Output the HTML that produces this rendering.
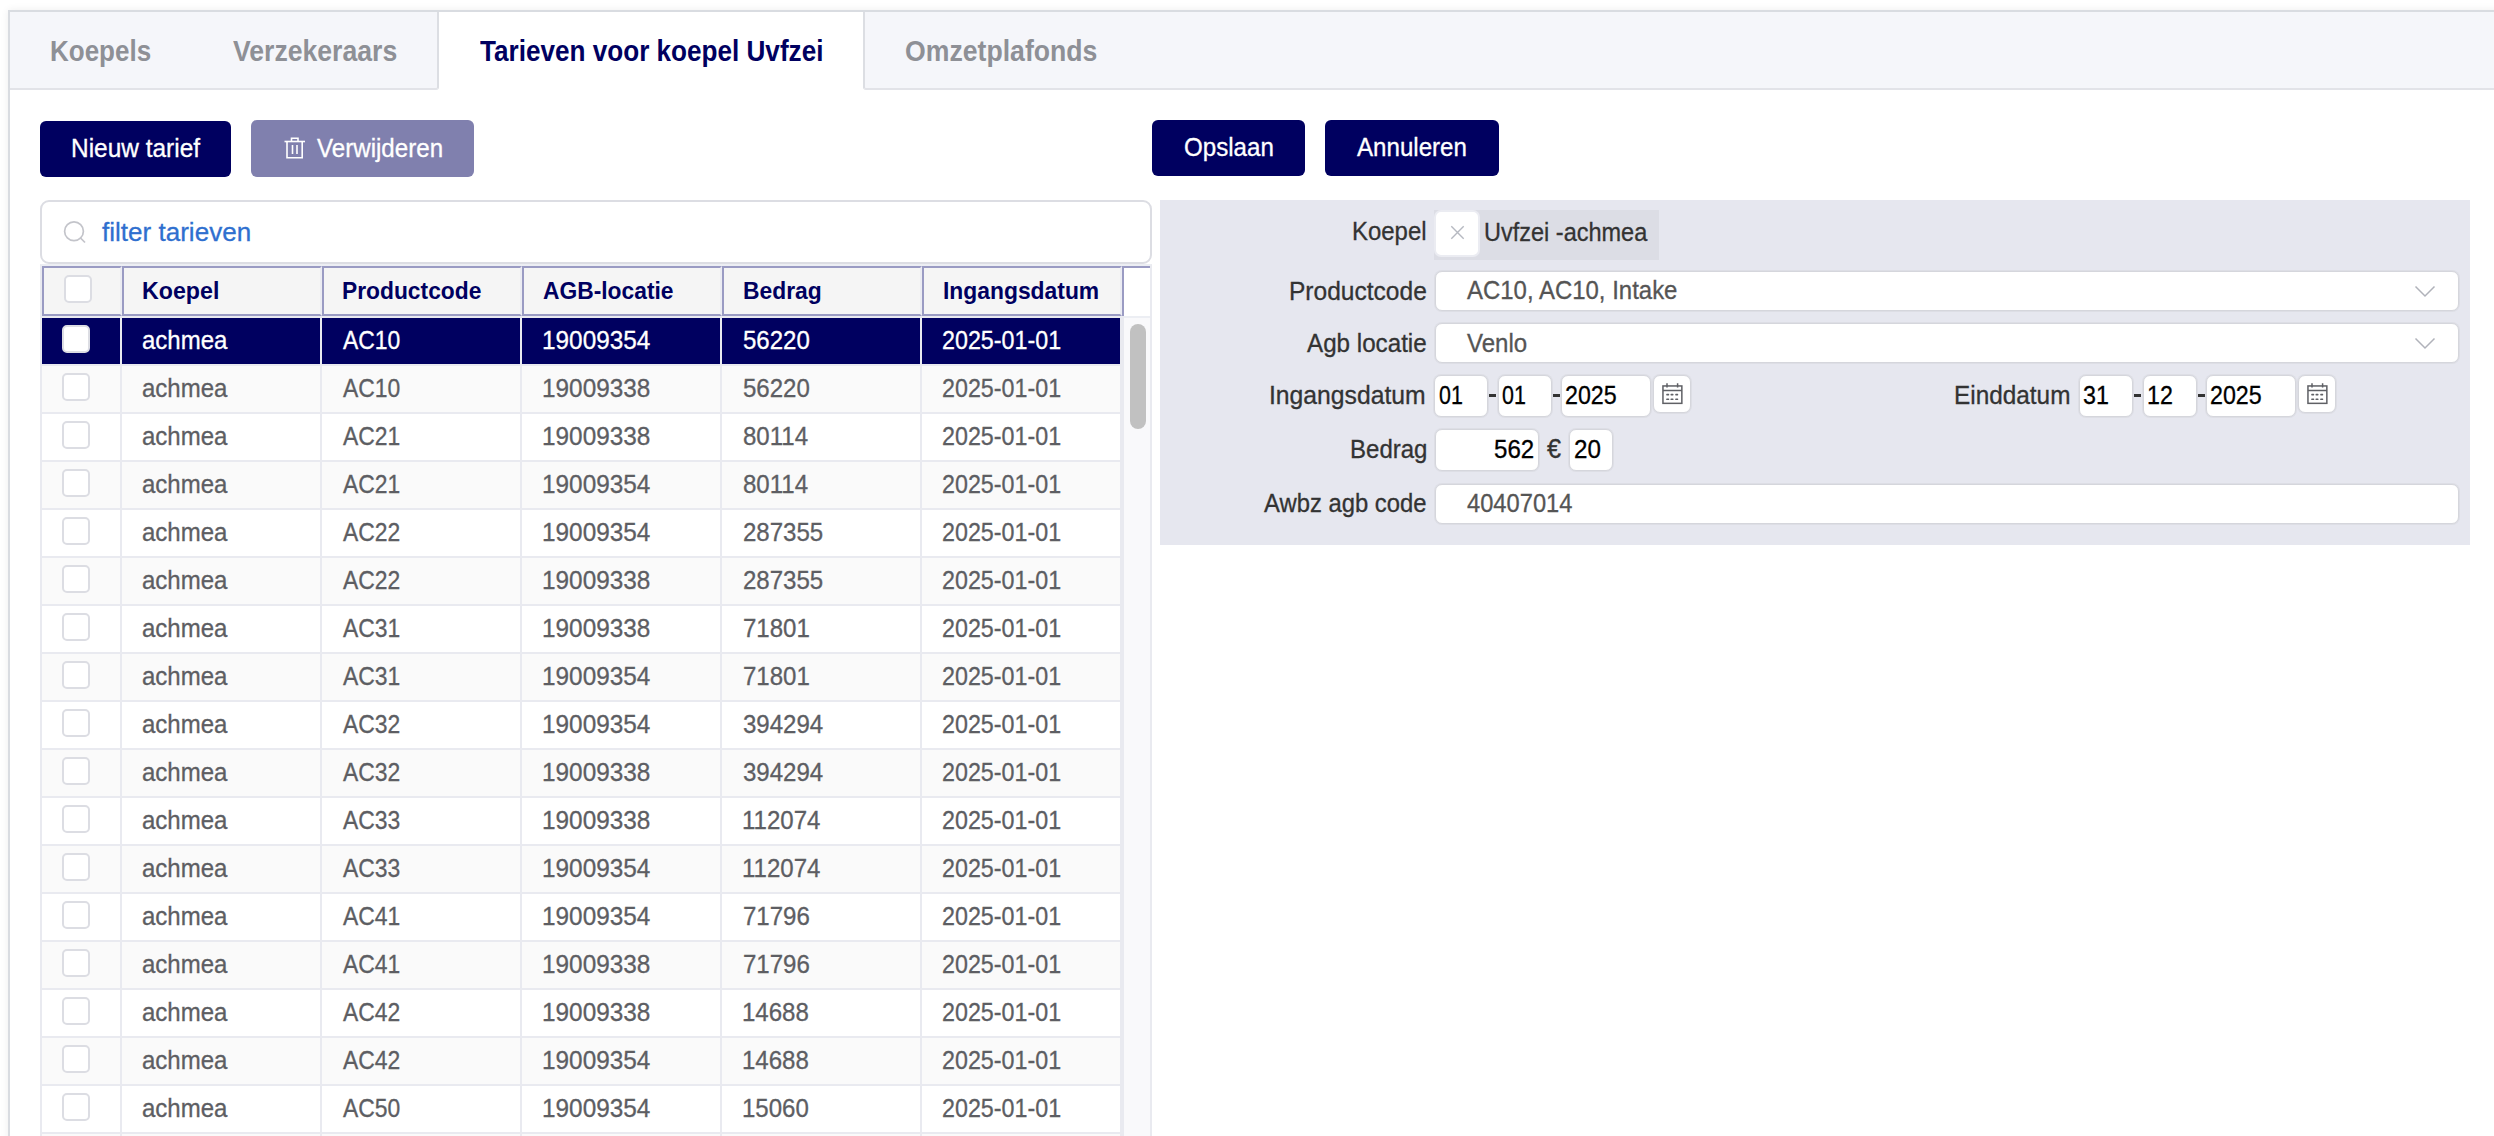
<!DOCTYPE html>
<html><head><meta charset="utf-8"><title>Tarieven</title>
<style>
html,body{margin:0;padding:0;background:#fff;width:2494px;height:1136px;overflow:hidden;}
body{position:relative;font-family:"Liberation Sans", sans-serif;}
.t{position:absolute;white-space:pre;transform-origin:0 0;-webkit-text-stroke:0.3px currentColor;}
.r{position:absolute;box-sizing:border-box;}
svg{position:absolute;overflow:visible;}
</style></head><body>

<div class="r" style="left:8px;top:10px;width:2592px;height:1290px;border-left:2px solid #d9dce1;border-top:2px solid #d9dce1;box-shadow:0 0 8px rgba(0,0,0,0.07);background:#fff;"></div>
<div class="r" style="left:10px;top:12px;width:429px;height:78px;background:#f5f6fa;border-right:2px solid #dcdee3;border-bottom:2px solid #e2e3e8;border-bottom-right-radius:3px;"></div>
<div class="r" style="left:863px;top:12px;width:1737px;height:78px;background:#f5f6fa;border-left:2px solid #dcdee3;border-bottom:2px solid #e2e3e8;border-bottom-left-radius:3px;"></div>
<div class="r" style="left:40px;top:121px;width:191px;height:56px;background:#000060;border-radius:6px;"></div>
<div class="r" style="left:251px;top:120px;width:223px;height:57px;background:#8080ae;border-radius:6px;"></div>
<svg style="left:284px;top:137px" width="22" height="23" viewBox="0 0 22 23">
<g fill="none" stroke="#fff" stroke-width="1.6">
<path d="M0.5 4.5 H21"/><path d="M7.5 4.5 V1.3 H14 V4.5"/>
<path d="M3 4.5 V20.8 H18.2 V4.5"/>
<path d="M8.5 8 V17"/><path d="M13 8 V17"/>
</g></svg>
<div class="r" style="left:1152px;top:120px;width:153px;height:56px;background:#000060;border-radius:6px;"></div>
<div class="r" style="left:1325px;top:120px;width:174px;height:56px;background:#000060;border-radius:6px;"></div>
<div class="r" style="left:40px;top:200px;width:1112px;height:64px;border:2px solid #dcdde3;border-radius:9px;background:#fff;"></div>
<svg style="left:62px;top:220px" width="26" height="26" viewBox="0 0 26 26">
<g fill="none" stroke="#c3c4ca" stroke-width="1.7"><circle cx="12" cy="11.3" r="9.4"/><path d="M18.5 18 L23 22.5"/></g></svg>
<div class="r" style="left:40px;top:264px;width:1112px;height:936px;border-left:2px solid #e9eaf0;border-right:2px solid #e9eaf0;border-top:2px solid #eceef3;background:#fff;"></div>
<div class="r" style="left:42px;top:266px;width:80px;height:50px;background:#f5f5f5;border-left:2px solid #9a9bc3;border-top:2px solid #9a9bc3;border-bottom:2px solid #9a9bc3;border-right:2px solid #ebecf2;"></div>
<div class="r" style="left:122px;top:266px;width:200px;height:50px;background:#f5f5f5;border-left:2px solid #9a9bc3;border-top:2px solid #9a9bc3;border-bottom:2px solid #9a9bc3;border-right:2px solid #ebecf2;"></div>
<div class="r" style="left:322px;top:266px;width:200px;height:50px;background:#f5f5f5;border-left:2px solid #9a9bc3;border-top:2px solid #9a9bc3;border-bottom:2px solid #9a9bc3;border-right:2px solid #ebecf2;"></div>
<div class="r" style="left:522px;top:266px;width:200px;height:50px;background:#f5f5f5;border-left:2px solid #9a9bc3;border-top:2px solid #9a9bc3;border-bottom:2px solid #9a9bc3;border-right:2px solid #ebecf2;"></div>
<div class="r" style="left:722px;top:266px;width:200px;height:50px;background:#f5f5f5;border-left:2px solid #9a9bc3;border-top:2px solid #9a9bc3;border-bottom:2px solid #9a9bc3;border-right:2px solid #ebecf2;"></div>
<div class="r" style="left:922px;top:266px;width:200px;height:50px;background:#f5f5f5;border-left:2px solid #9a9bc3;border-top:2px solid #9a9bc3;border-bottom:2px solid #9a9bc3;border-right:2px solid #ebecf2;"></div>
<div class="r" style="left:1122px;top:266px;width:28px;height:52px;background:#fff;border-left:2px solid #9a9bc3;border-top:2px solid #9a9bc3;border-bottom:2px solid #eceef3;"></div>
<div class="r" style="left:64px;top:275px;width:28px;height:28px;background:#fff;border:2px solid #dcdde3;border-radius:5px;"></div>
<div class="r" style="left:42px;top:316px;width:1082px;height:884px;background:#e9eaf0;"></div>
<div class="r" style="left:42px;top:318px;width:78px;height:46px;background:#000060;"></div>
<div class="r" style="left:122px;top:318px;width:198px;height:46px;background:#000060;"></div>
<div class="r" style="left:322px;top:318px;width:198px;height:46px;background:#000060;"></div>
<div class="r" style="left:522px;top:318px;width:198px;height:46px;background:#000060;"></div>
<div class="r" style="left:722px;top:318px;width:198px;height:46px;background:#000060;"></div>
<div class="r" style="left:922px;top:318px;width:198px;height:46px;background:#000060;"></div>
<div class="r" style="left:62px;top:325px;width:28px;height:28px;background:#fff;border:2px solid #dcdde3;border-radius:5px;"></div>
<div class="r" style="left:42px;top:366px;width:78px;height:46px;background:#fafafa;"></div>
<div class="r" style="left:122px;top:366px;width:198px;height:46px;background:#fafafa;"></div>
<div class="r" style="left:322px;top:366px;width:198px;height:46px;background:#fafafa;"></div>
<div class="r" style="left:522px;top:366px;width:198px;height:46px;background:#fafafa;"></div>
<div class="r" style="left:722px;top:366px;width:198px;height:46px;background:#fafafa;"></div>
<div class="r" style="left:922px;top:366px;width:198px;height:46px;background:#fafafa;"></div>
<div class="r" style="left:62px;top:373px;width:28px;height:28px;background:#fff;border:2px solid #dcdde3;border-radius:5px;"></div>
<div class="r" style="left:42px;top:414px;width:78px;height:46px;background:#fff;"></div>
<div class="r" style="left:122px;top:414px;width:198px;height:46px;background:#fff;"></div>
<div class="r" style="left:322px;top:414px;width:198px;height:46px;background:#fff;"></div>
<div class="r" style="left:522px;top:414px;width:198px;height:46px;background:#fff;"></div>
<div class="r" style="left:722px;top:414px;width:198px;height:46px;background:#fff;"></div>
<div class="r" style="left:922px;top:414px;width:198px;height:46px;background:#fff;"></div>
<div class="r" style="left:62px;top:421px;width:28px;height:28px;background:#fff;border:2px solid #dcdde3;border-radius:5px;"></div>
<div class="r" style="left:42px;top:462px;width:78px;height:46px;background:#fafafa;"></div>
<div class="r" style="left:122px;top:462px;width:198px;height:46px;background:#fafafa;"></div>
<div class="r" style="left:322px;top:462px;width:198px;height:46px;background:#fafafa;"></div>
<div class="r" style="left:522px;top:462px;width:198px;height:46px;background:#fafafa;"></div>
<div class="r" style="left:722px;top:462px;width:198px;height:46px;background:#fafafa;"></div>
<div class="r" style="left:922px;top:462px;width:198px;height:46px;background:#fafafa;"></div>
<div class="r" style="left:62px;top:469px;width:28px;height:28px;background:#fff;border:2px solid #dcdde3;border-radius:5px;"></div>
<div class="r" style="left:42px;top:510px;width:78px;height:46px;background:#fff;"></div>
<div class="r" style="left:122px;top:510px;width:198px;height:46px;background:#fff;"></div>
<div class="r" style="left:322px;top:510px;width:198px;height:46px;background:#fff;"></div>
<div class="r" style="left:522px;top:510px;width:198px;height:46px;background:#fff;"></div>
<div class="r" style="left:722px;top:510px;width:198px;height:46px;background:#fff;"></div>
<div class="r" style="left:922px;top:510px;width:198px;height:46px;background:#fff;"></div>
<div class="r" style="left:62px;top:517px;width:28px;height:28px;background:#fff;border:2px solid #dcdde3;border-radius:5px;"></div>
<div class="r" style="left:42px;top:558px;width:78px;height:46px;background:#fafafa;"></div>
<div class="r" style="left:122px;top:558px;width:198px;height:46px;background:#fafafa;"></div>
<div class="r" style="left:322px;top:558px;width:198px;height:46px;background:#fafafa;"></div>
<div class="r" style="left:522px;top:558px;width:198px;height:46px;background:#fafafa;"></div>
<div class="r" style="left:722px;top:558px;width:198px;height:46px;background:#fafafa;"></div>
<div class="r" style="left:922px;top:558px;width:198px;height:46px;background:#fafafa;"></div>
<div class="r" style="left:62px;top:565px;width:28px;height:28px;background:#fff;border:2px solid #dcdde3;border-radius:5px;"></div>
<div class="r" style="left:42px;top:606px;width:78px;height:46px;background:#fff;"></div>
<div class="r" style="left:122px;top:606px;width:198px;height:46px;background:#fff;"></div>
<div class="r" style="left:322px;top:606px;width:198px;height:46px;background:#fff;"></div>
<div class="r" style="left:522px;top:606px;width:198px;height:46px;background:#fff;"></div>
<div class="r" style="left:722px;top:606px;width:198px;height:46px;background:#fff;"></div>
<div class="r" style="left:922px;top:606px;width:198px;height:46px;background:#fff;"></div>
<div class="r" style="left:62px;top:613px;width:28px;height:28px;background:#fff;border:2px solid #dcdde3;border-radius:5px;"></div>
<div class="r" style="left:42px;top:654px;width:78px;height:46px;background:#fafafa;"></div>
<div class="r" style="left:122px;top:654px;width:198px;height:46px;background:#fafafa;"></div>
<div class="r" style="left:322px;top:654px;width:198px;height:46px;background:#fafafa;"></div>
<div class="r" style="left:522px;top:654px;width:198px;height:46px;background:#fafafa;"></div>
<div class="r" style="left:722px;top:654px;width:198px;height:46px;background:#fafafa;"></div>
<div class="r" style="left:922px;top:654px;width:198px;height:46px;background:#fafafa;"></div>
<div class="r" style="left:62px;top:661px;width:28px;height:28px;background:#fff;border:2px solid #dcdde3;border-radius:5px;"></div>
<div class="r" style="left:42px;top:702px;width:78px;height:46px;background:#fff;"></div>
<div class="r" style="left:122px;top:702px;width:198px;height:46px;background:#fff;"></div>
<div class="r" style="left:322px;top:702px;width:198px;height:46px;background:#fff;"></div>
<div class="r" style="left:522px;top:702px;width:198px;height:46px;background:#fff;"></div>
<div class="r" style="left:722px;top:702px;width:198px;height:46px;background:#fff;"></div>
<div class="r" style="left:922px;top:702px;width:198px;height:46px;background:#fff;"></div>
<div class="r" style="left:62px;top:709px;width:28px;height:28px;background:#fff;border:2px solid #dcdde3;border-radius:5px;"></div>
<div class="r" style="left:42px;top:750px;width:78px;height:46px;background:#fafafa;"></div>
<div class="r" style="left:122px;top:750px;width:198px;height:46px;background:#fafafa;"></div>
<div class="r" style="left:322px;top:750px;width:198px;height:46px;background:#fafafa;"></div>
<div class="r" style="left:522px;top:750px;width:198px;height:46px;background:#fafafa;"></div>
<div class="r" style="left:722px;top:750px;width:198px;height:46px;background:#fafafa;"></div>
<div class="r" style="left:922px;top:750px;width:198px;height:46px;background:#fafafa;"></div>
<div class="r" style="left:62px;top:757px;width:28px;height:28px;background:#fff;border:2px solid #dcdde3;border-radius:5px;"></div>
<div class="r" style="left:42px;top:798px;width:78px;height:46px;background:#fff;"></div>
<div class="r" style="left:122px;top:798px;width:198px;height:46px;background:#fff;"></div>
<div class="r" style="left:322px;top:798px;width:198px;height:46px;background:#fff;"></div>
<div class="r" style="left:522px;top:798px;width:198px;height:46px;background:#fff;"></div>
<div class="r" style="left:722px;top:798px;width:198px;height:46px;background:#fff;"></div>
<div class="r" style="left:922px;top:798px;width:198px;height:46px;background:#fff;"></div>
<div class="r" style="left:62px;top:805px;width:28px;height:28px;background:#fff;border:2px solid #dcdde3;border-radius:5px;"></div>
<div class="r" style="left:42px;top:846px;width:78px;height:46px;background:#fafafa;"></div>
<div class="r" style="left:122px;top:846px;width:198px;height:46px;background:#fafafa;"></div>
<div class="r" style="left:322px;top:846px;width:198px;height:46px;background:#fafafa;"></div>
<div class="r" style="left:522px;top:846px;width:198px;height:46px;background:#fafafa;"></div>
<div class="r" style="left:722px;top:846px;width:198px;height:46px;background:#fafafa;"></div>
<div class="r" style="left:922px;top:846px;width:198px;height:46px;background:#fafafa;"></div>
<div class="r" style="left:62px;top:853px;width:28px;height:28px;background:#fff;border:2px solid #dcdde3;border-radius:5px;"></div>
<div class="r" style="left:42px;top:894px;width:78px;height:46px;background:#fff;"></div>
<div class="r" style="left:122px;top:894px;width:198px;height:46px;background:#fff;"></div>
<div class="r" style="left:322px;top:894px;width:198px;height:46px;background:#fff;"></div>
<div class="r" style="left:522px;top:894px;width:198px;height:46px;background:#fff;"></div>
<div class="r" style="left:722px;top:894px;width:198px;height:46px;background:#fff;"></div>
<div class="r" style="left:922px;top:894px;width:198px;height:46px;background:#fff;"></div>
<div class="r" style="left:62px;top:901px;width:28px;height:28px;background:#fff;border:2px solid #dcdde3;border-radius:5px;"></div>
<div class="r" style="left:42px;top:942px;width:78px;height:46px;background:#fafafa;"></div>
<div class="r" style="left:122px;top:942px;width:198px;height:46px;background:#fafafa;"></div>
<div class="r" style="left:322px;top:942px;width:198px;height:46px;background:#fafafa;"></div>
<div class="r" style="left:522px;top:942px;width:198px;height:46px;background:#fafafa;"></div>
<div class="r" style="left:722px;top:942px;width:198px;height:46px;background:#fafafa;"></div>
<div class="r" style="left:922px;top:942px;width:198px;height:46px;background:#fafafa;"></div>
<div class="r" style="left:62px;top:949px;width:28px;height:28px;background:#fff;border:2px solid #dcdde3;border-radius:5px;"></div>
<div class="r" style="left:42px;top:990px;width:78px;height:46px;background:#fff;"></div>
<div class="r" style="left:122px;top:990px;width:198px;height:46px;background:#fff;"></div>
<div class="r" style="left:322px;top:990px;width:198px;height:46px;background:#fff;"></div>
<div class="r" style="left:522px;top:990px;width:198px;height:46px;background:#fff;"></div>
<div class="r" style="left:722px;top:990px;width:198px;height:46px;background:#fff;"></div>
<div class="r" style="left:922px;top:990px;width:198px;height:46px;background:#fff;"></div>
<div class="r" style="left:62px;top:997px;width:28px;height:28px;background:#fff;border:2px solid #dcdde3;border-radius:5px;"></div>
<div class="r" style="left:42px;top:1038px;width:78px;height:46px;background:#fafafa;"></div>
<div class="r" style="left:122px;top:1038px;width:198px;height:46px;background:#fafafa;"></div>
<div class="r" style="left:322px;top:1038px;width:198px;height:46px;background:#fafafa;"></div>
<div class="r" style="left:522px;top:1038px;width:198px;height:46px;background:#fafafa;"></div>
<div class="r" style="left:722px;top:1038px;width:198px;height:46px;background:#fafafa;"></div>
<div class="r" style="left:922px;top:1038px;width:198px;height:46px;background:#fafafa;"></div>
<div class="r" style="left:62px;top:1045px;width:28px;height:28px;background:#fff;border:2px solid #dcdde3;border-radius:5px;"></div>
<div class="r" style="left:42px;top:1086px;width:78px;height:46px;background:#fff;"></div>
<div class="r" style="left:122px;top:1086px;width:198px;height:46px;background:#fff;"></div>
<div class="r" style="left:322px;top:1086px;width:198px;height:46px;background:#fff;"></div>
<div class="r" style="left:522px;top:1086px;width:198px;height:46px;background:#fff;"></div>
<div class="r" style="left:722px;top:1086px;width:198px;height:46px;background:#fff;"></div>
<div class="r" style="left:922px;top:1086px;width:198px;height:46px;background:#fff;"></div>
<div class="r" style="left:62px;top:1093px;width:28px;height:28px;background:#fff;border:2px solid #dcdde3;border-radius:5px;"></div>
<div class="r" style="left:42px;top:1134px;width:78px;height:46px;background:#fafafa;"></div>
<div class="r" style="left:122px;top:1134px;width:198px;height:46px;background:#fafafa;"></div>
<div class="r" style="left:322px;top:1134px;width:198px;height:46px;background:#fafafa;"></div>
<div class="r" style="left:522px;top:1134px;width:198px;height:46px;background:#fafafa;"></div>
<div class="r" style="left:722px;top:1134px;width:198px;height:46px;background:#fafafa;"></div>
<div class="r" style="left:922px;top:1134px;width:198px;height:46px;background:#fafafa;"></div>
<div class="r" style="left:62px;top:1141px;width:28px;height:28px;background:#fff;border:2px solid #dcdde3;border-radius:5px;"></div>
<div class="r" style="left:1124px;top:318px;width:26px;height:882px;background:#f9f9fb;"></div>
<div class="r" style="left:1130px;top:324px;width:16px;height:105px;background:#c1c1c1;border-radius:8px;"></div>
<div class="r" style="left:1160px;top:200px;width:1310px;height:345px;background:#e6e7ef;"></div>
<div class="r" style="left:1434px;top:210px;width:225px;height:50px;background:#dcdde5;"></div>
<div class="r" style="left:1434px;top:210px;width:46px;height:47px;background:#fff;border:2px solid #ebecf2;border-radius:7px;"></div>
<svg style="left:1451px;top:226px" width="13" height="13" viewBox="0 0 13 13"><g stroke="#b6b9c1" stroke-width="1.4"><path d="M0.3 0.3 L12.7 12.7 M12.7 0.3 L0.3 12.7"/></g></svg>
<div class="r" style="left:1435px;top:271px;width:1024px;height:40px;border:1px solid #d5d6dc;border-radius:7px;background:#fff;box-shadow:0 0 0 1px #dddee5;"></div>
<div class="r" style="left:1435px;top:323px;width:1024px;height:40px;border:1px solid #d5d6dc;border-radius:7px;background:#fff;box-shadow:0 0 0 1px #dddee5;"></div>
<svg style="left:2415px;top:286px" width="20" height="11" viewBox="0 0 20 11"><path d="M0.5 0.5 L10 10 L19.5 0.5" fill="none" stroke="#b0b2ba" stroke-width="1.5"/></svg>
<svg style="left:2415px;top:338px" width="20" height="11" viewBox="0 0 20 11"><path d="M0.5 0.5 L10 10 L19.5 0.5" fill="none" stroke="#b0b2ba" stroke-width="1.5"/></svg>
<div class="r" style="left:1434px;top:375px;width:54px;height:42px;border:1px solid #d5d6dc;border-radius:7px;background:#fff;box-shadow:0 0 0 1px #dddee5;"></div>
<div class="r" style="left:1498px;top:375px;width:54px;height:42px;border:1px solid #d5d6dc;border-radius:7px;background:#fff;box-shadow:0 0 0 1px #dddee5;"></div>
<div class="r" style="left:1561px;top:375px;width:90px;height:42px;border:1px solid #d5d6dc;border-radius:7px;background:#fff;box-shadow:0 0 0 1px #dddee5;"></div>
<div class="r" style="left:2079px;top:375px;width:54px;height:42px;border:1px solid #d5d6dc;border-radius:7px;background:#fff;box-shadow:0 0 0 1px #dddee5;"></div>
<div class="r" style="left:2143px;top:375px;width:54px;height:42px;border:1px solid #d5d6dc;border-radius:7px;background:#fff;box-shadow:0 0 0 1px #dddee5;"></div>
<div class="r" style="left:2206px;top:375px;width:90px;height:42px;border:1px solid #d5d6dc;border-radius:7px;background:#fff;box-shadow:0 0 0 1px #dddee5;"></div>
<div class="r" style="left:1489px;top:394px;width:7px;height:3px;background:#333;"></div>
<div class="r" style="left:1553px;top:394px;width:7px;height:3px;background:#333;"></div>
<div class="r" style="left:2134px;top:394px;width:7px;height:3px;background:#333;"></div>
<div class="r" style="left:2198px;top:394px;width:7px;height:3px;background:#333;"></div>
<div class="r" style="left:1653px;top:375px;width:38px;height:38px;border:1px solid #d5d6dc;border-radius:7px;background:#fff;box-shadow:0 0 0 1px #dddee5;"></div>
<svg style="left:1661px;top:382px" width="24" height="24" viewBox="0 0 24 24"><g fill="none" stroke="#5f6065" stroke-width="1.5">
<rect x="1.95" y="3.95" width="18.9" height="17.4"/><path d="M1.95 8.5 H20.85"/><path d="M6 1.2 V5.6 M16.6 1.2 V5.6"/></g>
<g fill="#5f6065"><rect x="5.2" y="11.8" width="3" height="1.6" rx="0.6"/><rect x="9.5" y="11.8" width="3" height="1.6" rx="0.6"/><rect x="14.2" y="11.8" width="3" height="1.6" rx="0.6"/>
<rect x="5.2" y="16.5" width="3" height="1.6" rx="0.6"/><rect x="9.5" y="16.5" width="3" height="1.6" rx="0.6"/><rect x="14.2" y="16.5" width="3" height="1.6" rx="0.6"/></g></svg>
<div class="r" style="left:2298px;top:375px;width:38px;height:38px;border:1px solid #d5d6dc;border-radius:7px;background:#fff;box-shadow:0 0 0 1px #dddee5;"></div>
<svg style="left:2306px;top:382px" width="24" height="24" viewBox="0 0 24 24"><g fill="none" stroke="#5f6065" stroke-width="1.5">
<rect x="1.95" y="3.95" width="18.9" height="17.4"/><path d="M1.95 8.5 H20.85"/><path d="M6 1.2 V5.6 M16.6 1.2 V5.6"/></g>
<g fill="#5f6065"><rect x="5.2" y="11.8" width="3" height="1.6" rx="0.6"/><rect x="9.5" y="11.8" width="3" height="1.6" rx="0.6"/><rect x="14.2" y="11.8" width="3" height="1.6" rx="0.6"/>
<rect x="5.2" y="16.5" width="3" height="1.6" rx="0.6"/><rect x="9.5" y="16.5" width="3" height="1.6" rx="0.6"/><rect x="14.2" y="16.5" width="3" height="1.6" rx="0.6"/></g></svg>
<div class="r" style="left:1435px;top:429px;width:104px;height:42px;border:1px solid #d5d6dc;border-radius:7px;background:#fff;box-shadow:0 0 0 1px #dddee5;"></div>
<div class="r" style="left:1569px;top:429px;width:44px;height:42px;border:1px solid #d5d6dc;border-radius:7px;background:#fff;box-shadow:0 0 0 1px #dddee5;"></div>
<div class="r" style="left:1435px;top:484px;width:1024px;height:40px;border:1px solid #d5d6dc;border-radius:7px;background:#fff;box-shadow:0 0 0 1px #dddee5;"></div>
<div class="t" style="left:49.61px;top:37px;font-size:29px;line-height:29px;font-weight:700;color:#8e9096;transform:scaleX(0.8964);-webkit-text-stroke:0;">Koepels</div>
<div class="t" style="left:233.20px;top:37px;font-size:29px;line-height:29px;font-weight:700;color:#8e9096;transform:scaleX(0.9174);-webkit-text-stroke:0;">Verzekeraars</div>
<div class="t" style="left:479.90px;top:37px;font-size:29px;line-height:29px;font-weight:700;color:#000060;transform:scaleX(0.9003);-webkit-text-stroke:0;">Tarieven voor koepel Uvfzei</div>
<div class="t" style="left:905.18px;top:37px;font-size:29px;line-height:29px;font-weight:700;color:#8e9096;transform:scaleX(0.9184);-webkit-text-stroke:0;">Omzetplafonds</div>
<div class="t" style="left:70.84px;top:136px;font-size:25px;line-height:25px;font-weight:400;color:#fff;transform:scaleX(0.9777);">Nieuw tarief</div>
<div class="t" style="left:316.90px;top:136px;font-size:25px;line-height:25px;font-weight:400;color:#fff;transform:scaleX(0.9651);">Verwijderen</div>
<div class="t" style="left:1183.54px;top:135px;font-size:25px;line-height:25px;font-weight:400;color:#fff;transform:scaleX(0.9648);">Opslaan</div>
<div class="t" style="left:1357.40px;top:135px;font-size:25px;line-height:25px;font-weight:400;color:#fff;transform:scaleX(0.9646);">Annuleren</div>
<div class="t" style="left:102.10px;top:219px;font-size:26px;line-height:26px;font-weight:400;color:#2f6fcf;transform:scaleX(1.0020);">filter tarieven</div>
<div class="t" style="left:142.07px;top:279px;font-size:24px;line-height:24px;font-weight:700;color:#000060;transform:scaleX(0.9671);-webkit-text-stroke:0;">Koepel</div>
<div class="t" style="left:342.30px;top:279px;font-size:24px;line-height:24px;font-weight:700;color:#000060;transform:scaleX(0.9500);-webkit-text-stroke:0;">Productcode</div>
<div class="t" style="left:543.25px;top:279px;font-size:24px;line-height:24px;font-weight:700;color:#000060;transform:scaleX(0.9500);-webkit-text-stroke:0;">AGB-locatie</div>
<div class="t" style="left:742.80px;top:279px;font-size:24px;line-height:24px;font-weight:700;color:#000060;transform:scaleX(0.9519);-webkit-text-stroke:0;">Bedrag</div>
<div class="t" style="left:943.10px;top:279px;font-size:24px;line-height:24px;font-weight:700;color:#000060;transform:scaleX(0.9522);-webkit-text-stroke:0;">Ingangsdatum</div>
<div class="t" style="left:142.04px;top:328px;font-size:25px;line-height:25px;font-weight:400;color:#fff;transform:scaleX(0.9602);">achmea</div>
<div class="t" style="left:343.00px;top:328px;font-size:25px;line-height:25px;font-weight:400;color:#fff;transform:scaleX(0.9161);">AC10</div>
<div class="t" style="left:542.05px;top:328px;font-size:25px;line-height:25px;font-weight:400;color:#fff;transform:scaleX(0.9741);">19009354</div>
<div class="t" style="left:742.54px;top:328px;font-size:25px;line-height:25px;font-weight:400;color:#fff;transform:scaleX(0.9618);">56220</div>
<div class="t" style="left:942.07px;top:328px;font-size:25px;line-height:25px;font-weight:400;color:#fff;transform:scaleX(0.9317);">2025-01-01</div>
<div class="t" style="left:142.04px;top:376px;font-size:25px;line-height:25px;font-weight:400;color:#5d5e63;transform:scaleX(0.9602);">achmea</div>
<div class="t" style="left:343.00px;top:376px;font-size:25px;line-height:25px;font-weight:400;color:#5d5e63;transform:scaleX(0.9161);">AC10</div>
<div class="t" style="left:542.05px;top:376px;font-size:25px;line-height:25px;font-weight:400;color:#5d5e63;transform:scaleX(0.9741);">19009338</div>
<div class="t" style="left:742.54px;top:376px;font-size:25px;line-height:25px;font-weight:400;color:#5d5e63;transform:scaleX(0.9618);">56220</div>
<div class="t" style="left:942.07px;top:376px;font-size:25px;line-height:25px;font-weight:400;color:#5d5e63;transform:scaleX(0.9317);">2025-01-01</div>
<div class="t" style="left:142.04px;top:424px;font-size:25px;line-height:25px;font-weight:400;color:#5d5e63;transform:scaleX(0.9602);">achmea</div>
<div class="t" style="left:343.00px;top:424px;font-size:25px;line-height:25px;font-weight:400;color:#5d5e63;transform:scaleX(0.9161);">AC21</div>
<div class="t" style="left:542.05px;top:424px;font-size:25px;line-height:25px;font-weight:400;color:#5d5e63;transform:scaleX(0.9741);">19009338</div>
<div class="t" style="left:742.54px;top:424px;font-size:25px;line-height:25px;font-weight:400;color:#5d5e63;transform:scaleX(0.9618);">80114</div>
<div class="t" style="left:942.07px;top:424px;font-size:25px;line-height:25px;font-weight:400;color:#5d5e63;transform:scaleX(0.9317);">2025-01-01</div>
<div class="t" style="left:142.04px;top:472px;font-size:25px;line-height:25px;font-weight:400;color:#5d5e63;transform:scaleX(0.9602);">achmea</div>
<div class="t" style="left:343.00px;top:472px;font-size:25px;line-height:25px;font-weight:400;color:#5d5e63;transform:scaleX(0.9161);">AC21</div>
<div class="t" style="left:542.05px;top:472px;font-size:25px;line-height:25px;font-weight:400;color:#5d5e63;transform:scaleX(0.9741);">19009354</div>
<div class="t" style="left:742.54px;top:472px;font-size:25px;line-height:25px;font-weight:400;color:#5d5e63;transform:scaleX(0.9618);">80114</div>
<div class="t" style="left:942.07px;top:472px;font-size:25px;line-height:25px;font-weight:400;color:#5d5e63;transform:scaleX(0.9317);">2025-01-01</div>
<div class="t" style="left:142.04px;top:520px;font-size:25px;line-height:25px;font-weight:400;color:#5d5e63;transform:scaleX(0.9602);">achmea</div>
<div class="t" style="left:343.00px;top:520px;font-size:25px;line-height:25px;font-weight:400;color:#5d5e63;transform:scaleX(0.9161);">AC22</div>
<div class="t" style="left:542.05px;top:520px;font-size:25px;line-height:25px;font-weight:400;color:#5d5e63;transform:scaleX(0.9741);">19009354</div>
<div class="t" style="left:742.54px;top:520px;font-size:25px;line-height:25px;font-weight:400;color:#5d5e63;transform:scaleX(0.9618);">287355</div>
<div class="t" style="left:942.07px;top:520px;font-size:25px;line-height:25px;font-weight:400;color:#5d5e63;transform:scaleX(0.9317);">2025-01-01</div>
<div class="t" style="left:142.04px;top:568px;font-size:25px;line-height:25px;font-weight:400;color:#5d5e63;transform:scaleX(0.9602);">achmea</div>
<div class="t" style="left:343.00px;top:568px;font-size:25px;line-height:25px;font-weight:400;color:#5d5e63;transform:scaleX(0.9161);">AC22</div>
<div class="t" style="left:542.05px;top:568px;font-size:25px;line-height:25px;font-weight:400;color:#5d5e63;transform:scaleX(0.9741);">19009338</div>
<div class="t" style="left:742.54px;top:568px;font-size:25px;line-height:25px;font-weight:400;color:#5d5e63;transform:scaleX(0.9618);">287355</div>
<div class="t" style="left:942.07px;top:568px;font-size:25px;line-height:25px;font-weight:400;color:#5d5e63;transform:scaleX(0.9317);">2025-01-01</div>
<div class="t" style="left:142.04px;top:616px;font-size:25px;line-height:25px;font-weight:400;color:#5d5e63;transform:scaleX(0.9602);">achmea</div>
<div class="t" style="left:343.00px;top:616px;font-size:25px;line-height:25px;font-weight:400;color:#5d5e63;transform:scaleX(0.9161);">AC31</div>
<div class="t" style="left:542.05px;top:616px;font-size:25px;line-height:25px;font-weight:400;color:#5d5e63;transform:scaleX(0.9741);">19009338</div>
<div class="t" style="left:742.54px;top:616px;font-size:25px;line-height:25px;font-weight:400;color:#5d5e63;transform:scaleX(0.9618);">71801</div>
<div class="t" style="left:942.07px;top:616px;font-size:25px;line-height:25px;font-weight:400;color:#5d5e63;transform:scaleX(0.9317);">2025-01-01</div>
<div class="t" style="left:142.04px;top:664px;font-size:25px;line-height:25px;font-weight:400;color:#5d5e63;transform:scaleX(0.9602);">achmea</div>
<div class="t" style="left:343.00px;top:664px;font-size:25px;line-height:25px;font-weight:400;color:#5d5e63;transform:scaleX(0.9161);">AC31</div>
<div class="t" style="left:542.05px;top:664px;font-size:25px;line-height:25px;font-weight:400;color:#5d5e63;transform:scaleX(0.9741);">19009354</div>
<div class="t" style="left:742.54px;top:664px;font-size:25px;line-height:25px;font-weight:400;color:#5d5e63;transform:scaleX(0.9618);">71801</div>
<div class="t" style="left:942.07px;top:664px;font-size:25px;line-height:25px;font-weight:400;color:#5d5e63;transform:scaleX(0.9317);">2025-01-01</div>
<div class="t" style="left:142.04px;top:712px;font-size:25px;line-height:25px;font-weight:400;color:#5d5e63;transform:scaleX(0.9602);">achmea</div>
<div class="t" style="left:343.00px;top:712px;font-size:25px;line-height:25px;font-weight:400;color:#5d5e63;transform:scaleX(0.9161);">AC32</div>
<div class="t" style="left:542.05px;top:712px;font-size:25px;line-height:25px;font-weight:400;color:#5d5e63;transform:scaleX(0.9741);">19009354</div>
<div class="t" style="left:742.54px;top:712px;font-size:25px;line-height:25px;font-weight:400;color:#5d5e63;transform:scaleX(0.9618);">394294</div>
<div class="t" style="left:942.07px;top:712px;font-size:25px;line-height:25px;font-weight:400;color:#5d5e63;transform:scaleX(0.9317);">2025-01-01</div>
<div class="t" style="left:142.04px;top:760px;font-size:25px;line-height:25px;font-weight:400;color:#5d5e63;transform:scaleX(0.9602);">achmea</div>
<div class="t" style="left:343.00px;top:760px;font-size:25px;line-height:25px;font-weight:400;color:#5d5e63;transform:scaleX(0.9161);">AC32</div>
<div class="t" style="left:542.05px;top:760px;font-size:25px;line-height:25px;font-weight:400;color:#5d5e63;transform:scaleX(0.9741);">19009338</div>
<div class="t" style="left:742.54px;top:760px;font-size:25px;line-height:25px;font-weight:400;color:#5d5e63;transform:scaleX(0.9618);">394294</div>
<div class="t" style="left:942.07px;top:760px;font-size:25px;line-height:25px;font-weight:400;color:#5d5e63;transform:scaleX(0.9317);">2025-01-01</div>
<div class="t" style="left:142.04px;top:808px;font-size:25px;line-height:25px;font-weight:400;color:#5d5e63;transform:scaleX(0.9602);">achmea</div>
<div class="t" style="left:343.00px;top:808px;font-size:25px;line-height:25px;font-weight:400;color:#5d5e63;transform:scaleX(0.9161);">AC33</div>
<div class="t" style="left:542.05px;top:808px;font-size:25px;line-height:25px;font-weight:400;color:#5d5e63;transform:scaleX(0.9741);">19009338</div>
<div class="t" style="left:741.58px;top:808px;font-size:25px;line-height:25px;font-weight:400;color:#5d5e63;transform:scaleX(0.9618);">112074</div>
<div class="t" style="left:942.07px;top:808px;font-size:25px;line-height:25px;font-weight:400;color:#5d5e63;transform:scaleX(0.9317);">2025-01-01</div>
<div class="t" style="left:142.04px;top:856px;font-size:25px;line-height:25px;font-weight:400;color:#5d5e63;transform:scaleX(0.9602);">achmea</div>
<div class="t" style="left:343.00px;top:856px;font-size:25px;line-height:25px;font-weight:400;color:#5d5e63;transform:scaleX(0.9161);">AC33</div>
<div class="t" style="left:542.05px;top:856px;font-size:25px;line-height:25px;font-weight:400;color:#5d5e63;transform:scaleX(0.9741);">19009354</div>
<div class="t" style="left:741.58px;top:856px;font-size:25px;line-height:25px;font-weight:400;color:#5d5e63;transform:scaleX(0.9618);">112074</div>
<div class="t" style="left:942.07px;top:856px;font-size:25px;line-height:25px;font-weight:400;color:#5d5e63;transform:scaleX(0.9317);">2025-01-01</div>
<div class="t" style="left:142.04px;top:904px;font-size:25px;line-height:25px;font-weight:400;color:#5d5e63;transform:scaleX(0.9602);">achmea</div>
<div class="t" style="left:343.00px;top:904px;font-size:25px;line-height:25px;font-weight:400;color:#5d5e63;transform:scaleX(0.9161);">AC41</div>
<div class="t" style="left:542.05px;top:904px;font-size:25px;line-height:25px;font-weight:400;color:#5d5e63;transform:scaleX(0.9741);">19009354</div>
<div class="t" style="left:742.54px;top:904px;font-size:25px;line-height:25px;font-weight:400;color:#5d5e63;transform:scaleX(0.9618);">71796</div>
<div class="t" style="left:942.07px;top:904px;font-size:25px;line-height:25px;font-weight:400;color:#5d5e63;transform:scaleX(0.9317);">2025-01-01</div>
<div class="t" style="left:142.04px;top:952px;font-size:25px;line-height:25px;font-weight:400;color:#5d5e63;transform:scaleX(0.9602);">achmea</div>
<div class="t" style="left:343.00px;top:952px;font-size:25px;line-height:25px;font-weight:400;color:#5d5e63;transform:scaleX(0.9161);">AC41</div>
<div class="t" style="left:542.05px;top:952px;font-size:25px;line-height:25px;font-weight:400;color:#5d5e63;transform:scaleX(0.9741);">19009338</div>
<div class="t" style="left:742.54px;top:952px;font-size:25px;line-height:25px;font-weight:400;color:#5d5e63;transform:scaleX(0.9618);">71796</div>
<div class="t" style="left:942.07px;top:952px;font-size:25px;line-height:25px;font-weight:400;color:#5d5e63;transform:scaleX(0.9317);">2025-01-01</div>
<div class="t" style="left:142.04px;top:1000px;font-size:25px;line-height:25px;font-weight:400;color:#5d5e63;transform:scaleX(0.9602);">achmea</div>
<div class="t" style="left:343.00px;top:1000px;font-size:25px;line-height:25px;font-weight:400;color:#5d5e63;transform:scaleX(0.9161);">AC42</div>
<div class="t" style="left:542.05px;top:1000px;font-size:25px;line-height:25px;font-weight:400;color:#5d5e63;transform:scaleX(0.9741);">19009338</div>
<div class="t" style="left:741.58px;top:1000px;font-size:25px;line-height:25px;font-weight:400;color:#5d5e63;transform:scaleX(0.9618);">14688</div>
<div class="t" style="left:942.07px;top:1000px;font-size:25px;line-height:25px;font-weight:400;color:#5d5e63;transform:scaleX(0.9317);">2025-01-01</div>
<div class="t" style="left:142.04px;top:1048px;font-size:25px;line-height:25px;font-weight:400;color:#5d5e63;transform:scaleX(0.9602);">achmea</div>
<div class="t" style="left:343.00px;top:1048px;font-size:25px;line-height:25px;font-weight:400;color:#5d5e63;transform:scaleX(0.9161);">AC42</div>
<div class="t" style="left:542.05px;top:1048px;font-size:25px;line-height:25px;font-weight:400;color:#5d5e63;transform:scaleX(0.9741);">19009354</div>
<div class="t" style="left:741.58px;top:1048px;font-size:25px;line-height:25px;font-weight:400;color:#5d5e63;transform:scaleX(0.9618);">14688</div>
<div class="t" style="left:942.07px;top:1048px;font-size:25px;line-height:25px;font-weight:400;color:#5d5e63;transform:scaleX(0.9317);">2025-01-01</div>
<div class="t" style="left:142.04px;top:1096px;font-size:25px;line-height:25px;font-weight:400;color:#5d5e63;transform:scaleX(0.9602);">achmea</div>
<div class="t" style="left:343.00px;top:1096px;font-size:25px;line-height:25px;font-weight:400;color:#5d5e63;transform:scaleX(0.9161);">AC50</div>
<div class="t" style="left:542.05px;top:1096px;font-size:25px;line-height:25px;font-weight:400;color:#5d5e63;transform:scaleX(0.9741);">19009354</div>
<div class="t" style="left:741.58px;top:1096px;font-size:25px;line-height:25px;font-weight:400;color:#5d5e63;transform:scaleX(0.9618);">15060</div>
<div class="t" style="left:942.07px;top:1096px;font-size:25px;line-height:25px;font-weight:400;color:#5d5e63;transform:scaleX(0.9317);">2025-01-01</div>
<div class="t" style="left:142.04px;top:1144px;font-size:25px;line-height:25px;font-weight:400;color:#5d5e63;transform:scaleX(0.9602);">achmea</div>
<div class="t" style="left:343.00px;top:1144px;font-size:25px;line-height:25px;font-weight:400;color:#5d5e63;transform:scaleX(0.9161);">AC50</div>
<div class="t" style="left:542.05px;top:1144px;font-size:25px;line-height:25px;font-weight:400;color:#5d5e63;transform:scaleX(0.9741);">19009338</div>
<div class="t" style="left:741.58px;top:1144px;font-size:25px;line-height:25px;font-weight:400;color:#5d5e63;transform:scaleX(0.9618);">15060</div>
<div class="t" style="left:942.07px;top:1144px;font-size:25px;line-height:25px;font-weight:400;color:#5d5e63;transform:scaleX(0.9317);">2025-01-01</div>
<div class="t" style="left:1352.38px;top:219px;font-size:25px;line-height:25px;font-weight:400;color:#333;transform:scaleX(0.9581);">Koepel</div>
<div class="t" style="left:1288.74px;top:279px;font-size:25px;line-height:25px;font-weight:400;color:#333;transform:scaleX(0.9819);">Productcode</div>
<div class="t" style="left:1307.00px;top:331px;font-size:25px;line-height:25px;font-weight:400;color:#333;transform:scaleX(0.9675);">Agb locatie</div>
<div class="t" style="left:1269.02px;top:383px;font-size:25px;line-height:25px;font-weight:400;color:#333;transform:scaleX(0.9890);">Ingangsdatum</div>
<div class="t" style="left:1350.08px;top:437px;font-size:25px;line-height:25px;font-weight:400;color:#333;transform:scaleX(0.9610);">Bedrag</div>
<div class="t" style="left:1264.00px;top:491px;font-size:25px;line-height:25px;font-weight:400;color:#333;transform:scaleX(0.9529);">Awbz agb code</div>
<div class="t" style="left:1953.75px;top:383px;font-size:25px;line-height:25px;font-weight:400;color:#333;transform:scaleX(0.9741);">Einddatum</div>
<div class="t" style="left:1484.42px;top:220px;font-size:25px;line-height:25px;font-weight:400;color:#333;transform:scaleX(0.9401);">Uvfzei -achmea</div>
<div class="t" style="left:1466.80px;top:278px;font-size:25px;line-height:25px;font-weight:400;color:#555;transform:scaleX(0.9584);">AC10, AC10, Intake</div>
<div class="t" style="left:1466.80px;top:331px;font-size:25px;line-height:25px;font-weight:400;color:#555;transform:scaleX(0.9620);">Venlo</div>
<div class="t" style="left:1438.54px;top:383px;font-size:25px;line-height:25px;font-weight:400;color:#000;transform:scaleX(0.8577);">01</div>
<div class="t" style="left:1502.34px;top:383px;font-size:25px;line-height:25px;font-weight:400;color:#000;transform:scaleX(0.8577);">01</div>
<div class="t" style="left:1565.47px;top:383px;font-size:25px;line-height:25px;font-weight:400;color:#000;transform:scaleX(0.9300);">2025</div>
<div class="t" style="left:2083.47px;top:383px;font-size:25px;line-height:25px;font-weight:400;color:#000;transform:scaleX(0.9300);">31</div>
<div class="t" style="left:2146.54px;top:383px;font-size:25px;line-height:25px;font-weight:400;color:#000;transform:scaleX(0.9300);">12</div>
<div class="t" style="left:2210.47px;top:383px;font-size:25px;line-height:25px;font-weight:400;color:#000;transform:scaleX(0.9300);">2025</div>
<div class="t" style="left:1493.84px;top:437px;font-size:25px;line-height:25px;font-weight:400;color:#000;transform:scaleX(0.9625);">562</div>
<div class="t" style="left:1547.30px;top:436px;font-size:27px;line-height:27px;font-weight:400;color:#333;transform:scaleX(0.9333);">€</div>
<div class="t" style="left:1574.03px;top:437px;font-size:25px;line-height:25px;font-weight:400;color:#000;transform:scaleX(0.9692);">20</div>
<div class="t" style="left:1466.80px;top:491px;font-size:25px;line-height:25px;font-weight:400;color:#555;transform:scaleX(0.9477);">40407014</div>
</body></html>
